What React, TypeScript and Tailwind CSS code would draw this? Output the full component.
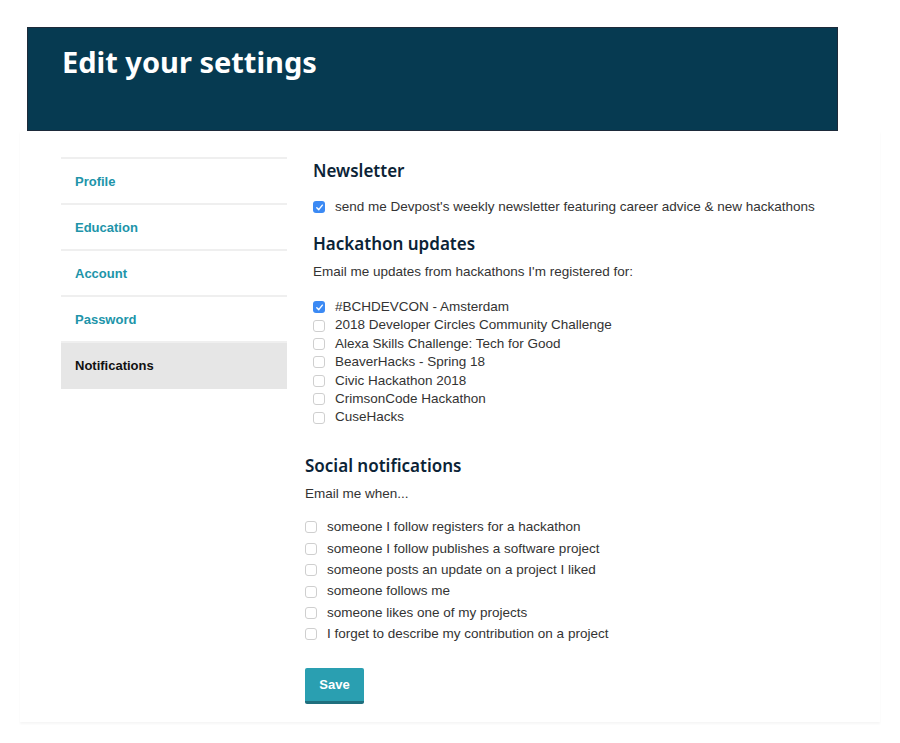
import React from "react";

const hackathons = [
  { label: "#BCHDEVCON - Amsterdam", checked: true },
  { label: "2018 Developer Circles Community Challenge", checked: false },
  { label: "Alexa Skills Challenge: Tech for Good", checked: false },
  { label: "BeaverHacks - Spring 18", checked: false },
  { label: "Civic Hackathon 2018", checked: false },
  { label: "CrimsonCode Hackathon", checked: false },
  { label: "CuseHacks", checked: false },
];

const social = [
  "someone I follow registers for a hackathon",
  "someone I follow publishes a software project",
  "someone posts an update on a project I liked",
  "someone follows me",
  "someone likes one of my projects",
  "I forget to describe my contribution on a project",
];

function Box({ checked }: { checked: boolean }) {
  if (checked) {
    return (
      <span className="flex h-[12px] w-[12px] shrink-0 items-center justify-center rounded-[3px] bg-[#3b8af4]">
        <svg width="9" height="9" viewBox="0 0 10 10">
          <path d="M2 5.2 L4.2 7.4 L8.2 2.4" fill="none" stroke="white" strokeWidth="1.6" strokeLinecap="round" strokeLinejoin="round" />
        </svg>
      </span>
    );
  }
  return <span className="h-[12px] w-[12px] shrink-0 rounded-[3px] border border-[#cfcfcf] bg-white" />;
}

const nav = ["Profile", "Education", "Account", "Password"];

export default function App() {
  return (
    <div className="min-h-[743px] w-[900px] bg-white font-['Liberation_Sans',Arial,sans-serif] text-[#333]">
      <div className="px-[27px] pt-[27px]">
        <div className="h-[104px] w-[811px] border border-[#1d2a3a] bg-[#063a51] px-[34px] pt-[14px]">
          <h1 className="font-['Noto_Sans',sans-serif] text-[29px] font-bold leading-[40px] text-white">
            Edit your settings
          </h1>
        </div>
      </div>

      <div className="mx-[20px] flex pb-[18px] pt-[26px] shadow-[0_2px_2px_rgba(0,0,0,0.04)]">
        <div className="ml-[41px] w-[226px] shrink-0">
          <div className="border-t-2 border-[#efefef]">
            {nav.map((n) => (
              <div
                key={n}
                className="flex h-[46px] items-center border-b-2 border-[#efefef] px-[14px] pt-[2px] text-[13px] font-bold text-[#2094a9]"
              >
                {n}
              </div>
            ))}
            <div className="flex h-[46px] items-center bg-[#e6e6e6] px-[14px] text-[13px] font-bold text-[#111]">
              Notifications
            </div>
          </div>
        </div>

        <div className="ml-[18px] flex-1">
          <div className="pl-[8px]">
            <h2 className="mt-[1px] font-['Noto_Sans',sans-serif] text-[17px] font-semibold leading-[26px] text-[#0b2336]">
              Newsletter
            </h2>
            <label className="mt-[14px] flex h-[18px] items-center gap-[10px] text-[13.5px]">
              <Box checked />
              <span>send me Devpost's weekly newsletter featuring career advice &amp; new hackathons</span>
            </label>
            <h2 className="mt-[15px] font-['Noto_Sans',sans-serif] text-[17px] font-semibold leading-[26px] text-[#0b2336]">
              Hackathon updates
            </h2>
            <p className="mt-[7px] text-[13.5px] leading-[16px]">Email me updates from hackathons I'm registered for:</p>
            <div className="mt-[18px] flex flex-col">
              {hackathons.map((h) => (
                <label key={h.label} className="flex h-[18.4px] items-center gap-[10px] text-[13.5px]">
                  <Box checked={h.checked} />
                  <span>{h.label}</span>
                </label>
              ))}
            </div>
          </div>

          <h2 className="mt-[26px] font-['Noto_Sans',sans-serif] text-[17px] font-semibold leading-[26px] text-[#0b2336]">
            Social notifications
          </h2>
          <p className="mt-[7px] text-[13.5px] leading-[16px]">Email me when...</p>
          <div className="mt-[15px] flex flex-col">
            {social.map((s) => (
              <label key={s} className="flex h-[21.4px] items-center gap-[10px] text-[13.5px]">
                <Box checked={false} />
                <span>{s}</span>
              </label>
            ))}
          </div>

          <button className="mt-[23px] h-[36px] w-[59px] rounded-[2px] border-b-[3px] border-[#1f6f7e] bg-[#2a9fb1] text-[13px] font-bold text-white">
            Save
          </button>
        </div>
      </div>
    </div>
  );
}
